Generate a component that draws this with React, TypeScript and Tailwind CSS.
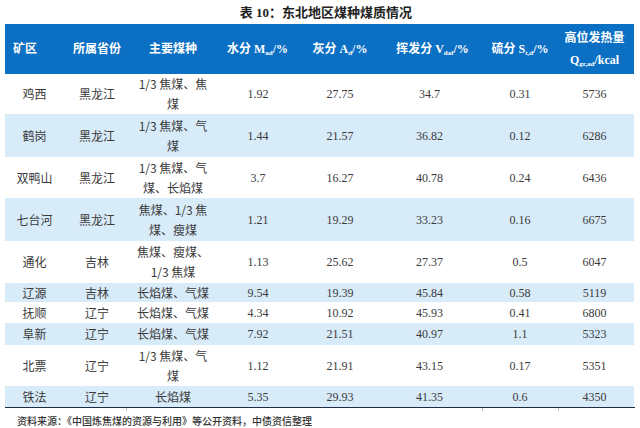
import React from 'react'

interface Row {
  area: string; prov: string; kind: string[]
  water: string; ash: string; vol: string; sul: string; heat: string
  h: string; alt: boolean
}

const ROWS: Row[] = [
  { area:'鸡西',   prov:'黑龙江', kind:['1/3 焦煤、焦','煤'],      water:'1.92', ash:'27.75', vol:'34.7',  sul:'0.31', heat:'5736', h:'h-[40px]', alt:false },
  { area:'鹤岗',   prov:'黑龙江', kind:['1/3 焦煤、气','煤'],      water:'1.44', ash:'21.57', vol:'36.82', sul:'0.12', heat:'6286', h:'h-[43px]', alt:true },
  { area:'双鸭山', prov:'黑龙江', kind:['1/3 焦煤、气','煤、长焰煤'], water:'3.7',  ash:'16.27', vol:'40.78', sul:'0.24', heat:'6436', h:'h-[41px]', alt:false },
  { area:'七台河', prov:'黑龙江', kind:['焦煤、1/3 焦','煤、瘦煤'],  water:'1.21', ash:'19.29', vol:'33.23', sul:'0.16', heat:'6675', h:'h-[43px]', alt:true },
  { area:'通化',   prov:'吉林',   kind:['焦煤、瘦煤、','1/3 焦煤'],  water:'1.13', ash:'25.62', vol:'27.37', sul:'0.5',  heat:'6047', h:'h-[42px]', alt:false },
  { area:'辽源',   prov:'吉林',   kind:['长焰煤、气煤'],            water:'9.54', ash:'19.39', vol:'45.84', sul:'0.58', heat:'5119', h:'h-[19px]', alt:true },
  { area:'抚顺',   prov:'辽宁',   kind:['长焰煤、气煤'],            water:'4.34', ash:'10.92', vol:'45.93', sul:'0.41', heat:'6800', h:'h-[21px]', alt:false },
  { area:'阜新',   prov:'辽宁',   kind:['长焰煤、气煤'],            water:'7.92', ash:'21.51', vol:'40.97', sul:'1.1',  heat:'5323', h:'h-[22px]', alt:true },
  { area:'北票',   prov:'辽宁',   kind:['1/3 焦煤、气','煤'],      water:'1.12', ash:'21.91', vol:'43.15', sul:'0.17', heat:'5351', h:'h-[41px]', alt:false },
  { area:'铁法',   prov:'辽宁',   kind:['长焰煤'],                 water:'5.35', ash:'29.93', vol:'41.35', sul:'0.6',  heat:'4350', h:'h-[21px]', alt:true },
]

const CJK = { fontFamily: '"Noto Sans CJK SC", "Noto Sans", sans-serif' }
const SERIF = { fontFamily: '"Liberation Serif", "Noto Sans CJK SC", serif' }

export default function App() {
  return (
    <div className="w-[640px] h-[428px] bg-white overflow-hidden relative text-[#3a3a3a]">
      {/* 标题 */}
      <div className="h-[24px] flex items-center justify-center pl-[12px]">
        <span className="text-[13px] font-bold text-[#222] leading-none" style={SERIF}>
          表 10：东北地区煤种煤质情况
        </span>
      </div>

      <div className="mx-[5px] w-[629px]">
        {/* 表头 */}
        <div className="flex h-[50px] bg-[#0b6fc3] text-white font-bold text-[12px] items-center" style={SERIF}>
          <div className="w-[58px] pl-[8px]">矿区</div>
          <div className="w-[68px] text-center">所属省份</div>
          <div className="w-[84px] text-center">主要煤种</div>
          <div className="w-[85px] text-center">水分 M<sub className="text-[7px]">ad</sub>/%</div>
          <div className="w-[80px] text-center">灰分 A<sub className="text-[7px]">d</sub>/%</div>
          <div className="w-[105px] text-center">挥发分 V<sub className="text-[7px]">daf</sub>/%</div>
          <div className="w-[70px] text-center">硫分 S<sub className="text-[7px]">t,d</sub>/%</div>
          <div className="w-[79px] flex flex-col items-center gap-[6px] leading-[16px]">
            <span>高位发热量</span>
            <span>Q<sub className="text-[7px]">gr,ad</sub>/kcal</span>
          </div>
        </div>

        {/* 数据行 */}
        {ROWS.map(r => (
          <div key={r.area} className={`flex items-center ${r.h} ${r.alt ? 'bg-[#d8ebf9]' : 'bg-white'} text-[12px]`}>
            <div className="w-[58px] text-center pl-[1px]" style={CJK}>{r.area}</div>
            <div className="w-[68px] text-center" style={CJK}>{r.prov}</div>
            <div className="w-[84px] flex flex-col items-center leading-[20px]" style={CJK}>
              {r.kind.map(k => <span key={k}>{k}</span>)}
            </div>
            <div className="w-[85px] text-center pl-[1px]" style={SERIF}>{r.water}</div>
            <div className="w-[80px] text-center" style={SERIF}>{r.ash}</div>
            <div className="w-[105px] text-center pr-[6px]" style={SERIF}>{r.vol}</div>
            <div className="w-[70px] text-center" style={SERIF}>{r.sul}</div>
            <div className="w-[79px] text-center" style={SERIF}>{r.heat}</div>
          </div>
        ))}

        {/* 底线 */}
        <div className="h-[1px] bg-[#1f2d44] w-[630px]" />
        <div className="relative h-[3px]">
          <div className="absolute left-[121px] top-0 w-[1px] h-[3px] bg-[#bbb]" />
          <div className="absolute left-[477px] top-0 w-[1px] h-[3px] bg-[#bbb]" />
          <div className="absolute left-[553px] top-0 w-[1px] h-[3px] bg-[#bbb]" />
        </div>
      </div>

      {/* 资料来源 */}
      <div className="pl-[17px] mt-[3px] text-[10px] font-medium text-[#333] leading-[14px]" style={CJK}>
        资料来源：《中国炼焦煤的资源与利用》等公开资料，中债资信整理
      </div>
    </div>
  )
}
